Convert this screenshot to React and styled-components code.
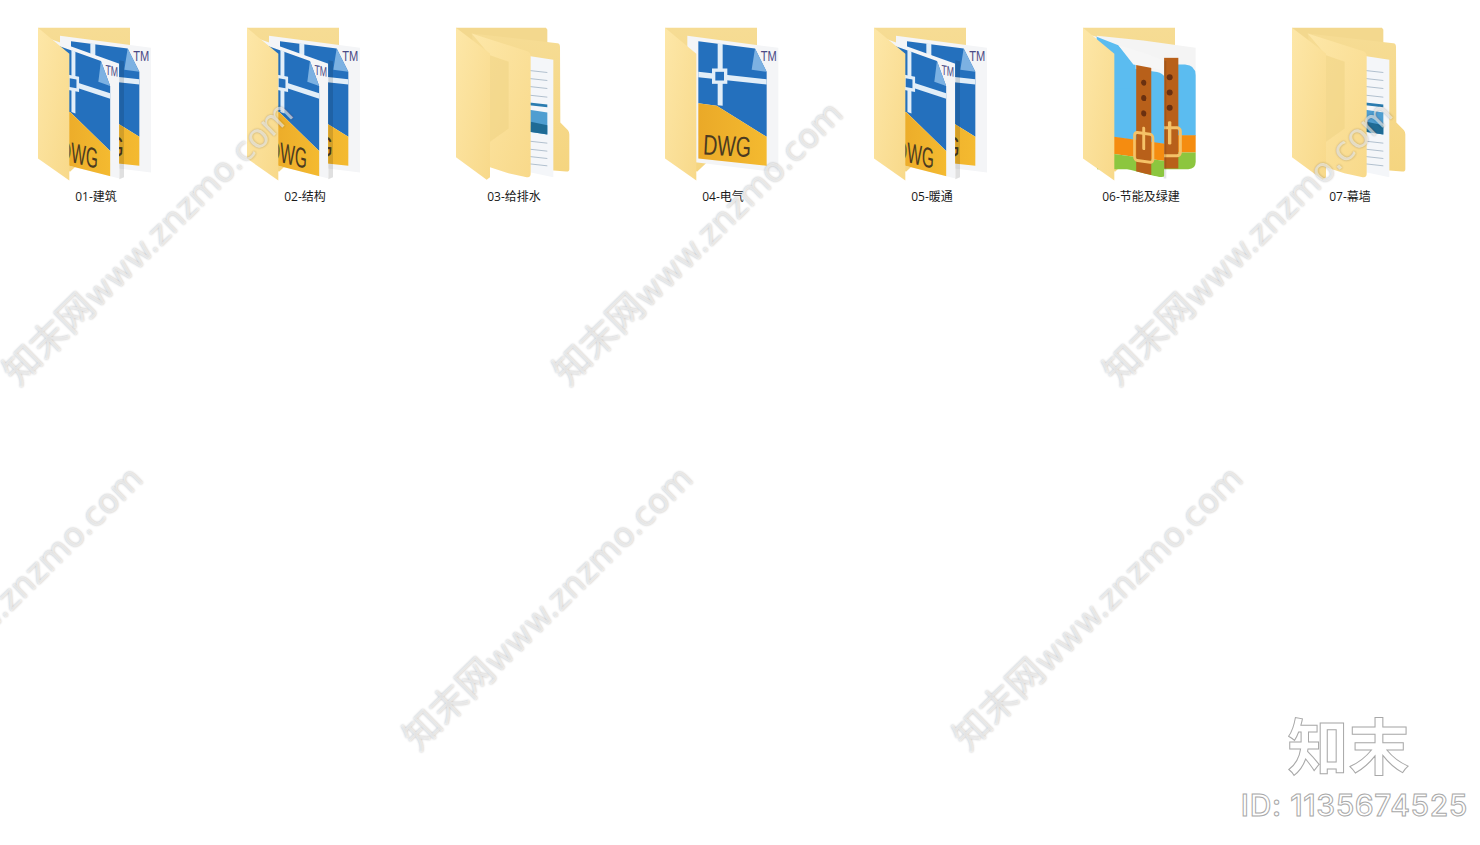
import styled, { createGlobalStyle } from "styled-components";

//------------------------------------------------------------------->

const GlobalStyle = createGlobalStyle`
  html, body {
    margin: 0;
    padding: 0;
    background: #fff;
    overflow: hidden;
  }
`;
const Page = styled.div`
  position: relative;
  width: 1480px;
  height: 845px;
  overflow: hidden;
  background: #fff;
  font-family: "Open Sans", "Noto Sans CJK SC", sans-serif;
`;
const FolderRow = styled.div`
  display: flex;
  gap: 49px;
  padding: 15px 0 0 16px;
`;
const FolderItem = styled.div`
  display: flex;
  flex-direction: column;
  align-items: center;
  width: 160px;
`;
const Icon = styled.svg`
  display: block;
  width: 160px;
  height: 167px;
`;
const Label = styled.div`
  position: relative;
  z-index: 1;
  margin-top: 7px;
  font-size: 12px;
  line-height: 16px;
  color: #1a1a1a;
  white-space: nowrap;
`;
const Watermark = styled.div`
  position: absolute;
  left: ${({ $x }) => $x}px;
  top: ${({ $y }) => $y}px;
  transform: rotate(-44.5deg);
  transform-origin: 0 50%;
  font-family: "DejaVu Sans", "Noto Sans CJK SC", sans-serif;
  font-size: 33px;
  line-height: 40px;
  white-space: nowrap;
  color: rgba(255, 255, 255, 0.6);
  text-shadow: 0 0 2px rgba(0, 0, 0, 0.2), 0 0 3px rgba(0, 0, 0, 0.1);
`;
const MarkName = styled.span`
  font-family: "Noto Sans CJK SC", sans-serif;
  font-size: 37px;
`;
const Brand = styled.div`
  position: absolute;
  right: 12px;
  bottom: 23px;
  display: flex;
  flex-direction: column;
  align-items: center;
  color: #fff;
  -webkit-text-stroke: 1px #a8a8a8;
`;
const BrandName = styled.div`
  font-family: "Noto Sans CJK SC", sans-serif;
  font-size: 61px;
  font-weight: 700;
  line-height: 62px;
  margin: 0 12px 13px 0;
`;
const BrandId = styled.div`
  font-family: "Inter", "Liberation Sans", sans-serif;
  font-size: 30px;
  font-weight: 500;
  line-height: 34px;
  letter-spacing: 0.6px;
`;
//------------------------------------------------------------------->

function Back() {
  return (
    <polygon points="54,38 330,38 330,300 150,470 54,400" fill="url(#backFill)" />
  );
}

function Flap() {
  return (
    <polygon points="54,38 148,116 148,496 54,430" fill="url(#flapFill)" />
  );
}

function DwgSheet({ transform }) {
  return (
    <g transform={transform}>
      <polygon points="112,62 385,98 385,472 112,438" fill="#f4f5f7" />
      <polygon points="145,78 315,100 350,170 350,365 200,272 145,264" fill="#2470bd" />
      <polygon points="145,264 200,272 350,365 350,452 145,430" fill="url(#gold)" />
      <polygon points="315,100 350,170 305,164" fill="#7cb1e2" />
      <polygon points="203,84 218,86 218,272 203,270" fill="#e2eef8" />
      <polygon points="145,170 350,192 350,208 145,186" fill="#e2eef8" />
      <rect x="186" y="160" width="46" height="46" fill="#e2eef8" />
      <rect x="196" y="170" width="26" height="26" fill="#2470bd" />
      <text x="332" y="138" fontFamily="Liberation Sans, sans-serif" fontSize="42" textLength="48" lengthAdjust="spacingAndGlyphs" fill="#4b4a85">TM</text>
      <text x="158" y="418" transform="rotate(3 158 418)" fontFamily="Liberation Sans, sans-serif" fontSize="86" textLength="144" lengthAdjust="spacingAndGlyphs" fill="#4a3a20">DWG</text>
    </g>
  );
}

function DwgIcon({ double }) {
  return (
    <>
      <Back />
      {double ? (
        <>
          <DwgSheet transform="translate(8,0)" />
          <polygon points="298,135 312,138 312,486 298,492" fill="#000" opacity="0.12" />
          <g clipPath="url(#frontClip)">
            <DwgSheet transform="matrix(0.79,0.15,0,1,-6,-10)" />
          </g>
        </>
      ) : (
        <DwgSheet transform="translate(9,0)" />
      )}
      <Flap />
    </>
  );
}

function DocIcon() {
  const lines = [166, 190, 214, 240, 378, 402, 424, 446];
  return (
    <g transform="translate(6,0)">
      <polygon points="48,38 318,38 322,44 322,300 48,300" fill="#f3d88e" />
      <path d="M95,55 L352,84 Q360,85 360,95 L361,322 L384,345 Q388,350 388,358 L388,462 Q388,470 378,469 L150,450 Z" fill="url(#backFill)" />
      <polygon points="262,122 340,134 340,486 262,470" fill="#f4f6f9" />
      {lines.map((y) => (
        <line key={y} x1="268" y1={y} x2="322" y2={y + 6} stroke="#8fa4b8" strokeWidth="2" />
      ))}
      <polygon points="268,262 322,268 322,276 268,270" fill="#2a7cb0" />
      <polygon points="268,284 322,292 322,358 268,350" fill="#4f9ed1" />
      <polygon points="272,320 322,330 322,358 268,350" fill="#1f6b95" />
      <path d="M95,55 L262,108 Q272,112 272,122 L272,476 Q272,488 260,486 L205,474 L150,456 L150,120 Z" fill="url(#flapFill)" />
      <polygon points="150,120 206,140 206,340 150,380" fill="#f0d486" opacity="0.6" />
      <polygon points="48,38 150,115 150,486 140,494 48,426" fill="url(#flapFill)" />
    </g>
  );
}

function RarSheet({ transform }) {
  return (
    <g transform={transform}>
      <polygon points="96,62 235,76 392,98 392,445 96,445" fill="#f4f4f4" />
      <path d="M96,65 L215,148 L360,148 Q392,150 392,180 L392,362 L96,362 Z" fill="#5bbcf0" />
      <polygon points="96,360 392,360 392,412 96,412" fill="#f58c10" />
      <path d="M96,412 L392,412 L392,440 Q392,462 370,462 L96,462 Z" fill="#8cc63f" />
      <rect x="288" y="128" width="52" height="332" fill="#b8601a" />
      <circle cx="314" cy="186" r="9" fill="#6a3010" />
      <circle cx="314" cy="232" r="9" fill="#6a3010" />
      <circle cx="314" cy="278" r="9" fill="#6a3010" />
      <rect x="282" y="338" width="64" height="84" rx="10" fill="none" stroke="#f5c268" strokeWidth="9" />
      <rect x="309" y="318" width="10" height="70" rx="4" fill="#f5c268" />
    </g>
  );
}

function RarIcon() {
  return (
    <>
      <Back />
      <g clipPath="url(#backClip)">
        <RarSheet />
      </g>
      <polygon points="296,135 304,138 304,490 296,490" fill="#000" opacity="0.1" />
      <g clipPath="url(#frontClip)">
        <RarSheet transform="matrix(0.87,0.12,0,1,-37,-21)" />
      </g>
      <polygon points="95,65 160,90 212,148 212,220 95,220" fill="#5bbcf0" />
      <polygon points="160,90 234,112 296,136 296,165 205,148" fill="#f6f6f6" />
      <Flap />
    </>
  );
}

const FOLDERS = [
  { name: "01-建筑", type: "double" },
  { name: "02-结构", type: "double" },
  { name: "03-给排水", type: "doc" },
  { name: "04-电气", type: "single" },
  { name: "05-暖通", type: "double" },
  { name: "06-节能及绿建", type: "rar" },
  { name: "07-幕墙", type: "doc" },
];

const MARKS = [
  [9, 375],
  [559, 375],
  [1109, 375],
  [-141, 740],
  [409, 740],
  [959, 740],
];

function App() {
  return (
    <Page>
      <GlobalStyle />
      <svg width="0" height="0" style={{ position: "absolute" }}>
        <defs>
          <linearGradient id="backFill" x1="0" y1="0" x2="0" y2="1">
            <stop offset="0" stopColor="#f6dc94" />
            <stop offset="1" stopColor="#f5d580" />
          </linearGradient>
          <linearGradient id="flapFill" x1="0" y1="0" x2="1" y2="1">
            <stop offset="0" stopColor="#fde7a8" />
            <stop offset="1" stopColor="#f8d98a" />
          </linearGradient>
          <linearGradient id="gold" x1="0" y1="0" x2="1" y2="0">
            <stop offset="0" stopColor="#eaa928" />
            <stop offset="1" stopColor="#f4ba30" />
          </linearGradient>
          <clipPath id="frontClip">
            <polygon points="60,40 298,100 298,490 148,452 60,400" />
          </clipPath>
          <clipPath id="backClip">
            <polygon points="60,40 400,40 400,480 60,480" />
          </clipPath>
        </defs>
      </svg>
      <FolderRow>
        {FOLDERS.map((f) => (
          <FolderItem key={f.name}>
            <Icon viewBox="-12 0 480 500">
              {f.type === "double" && <DwgIcon double />}
              {f.type === "single" && <DwgIcon />}
              {f.type === "doc" && <DocIcon />}
              {f.type === "rar" && <RarIcon />}
            </Icon>
            <Label>{f.name}</Label>
          </FolderItem>
        ))}
      </FolderRow>
      {MARKS.map(([x, y]) => (
        <Watermark key={`${x}-${y}`} $x={x} $y={y - 20}>
          <MarkName>知末网</MarkName>www.znzmo.com
        </Watermark>
      ))}
      <Brand>
        <BrandName>知末</BrandName>
        <BrandId>ID: 1135674525</BrandId>
      </Brand>
    </Page>
  );
}

export default App;
